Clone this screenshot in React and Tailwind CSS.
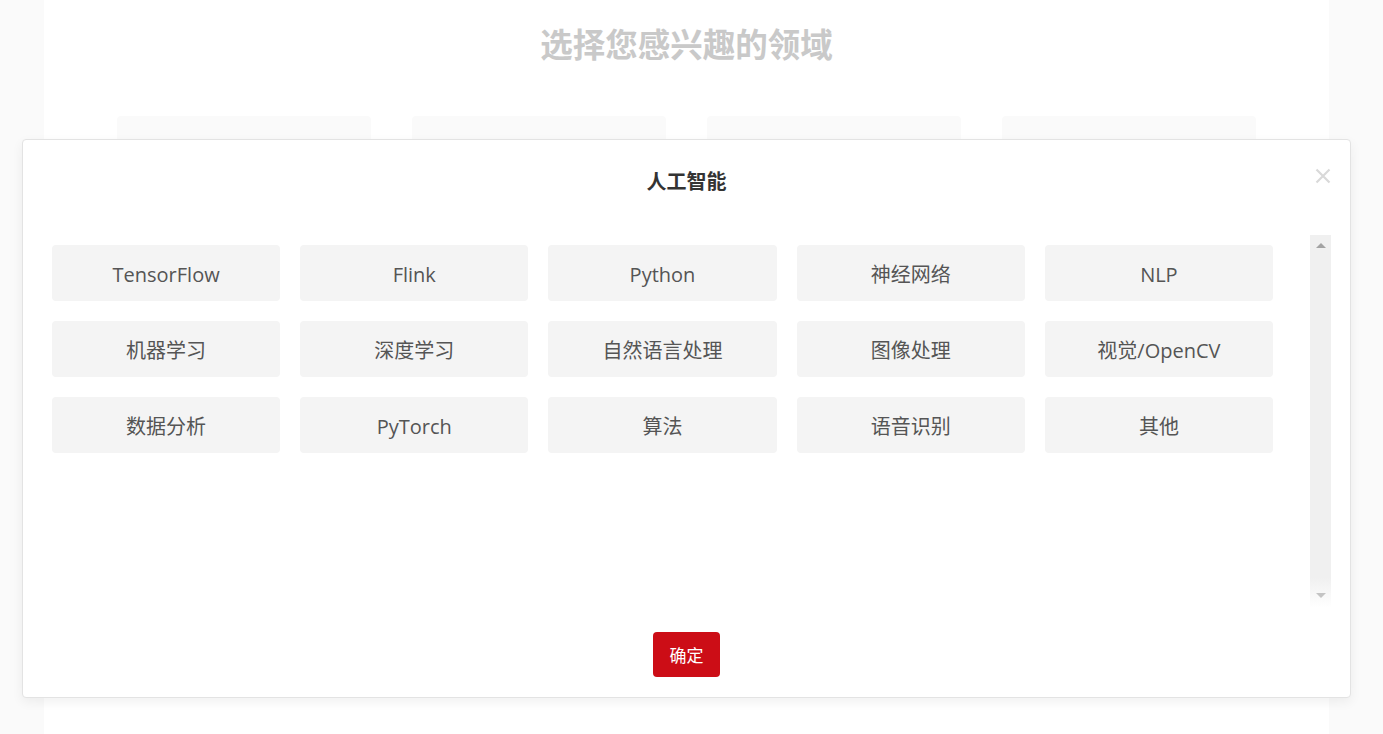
import React from "react";

const items = [
  "TensorFlow", "Flink", "Python", "神经网络", "NLP",
  "机器学习", "深度学习", "自然语言处理", "图像处理", "视觉/OpenCV",
  "数据分析", "PyTorch", "算法", "语音识别", "其他",
];

const font = { fontFamily: '"Open Sans", "Noto Sans CJK SC", sans-serif' };

export default function App() {
  return (
    <div className="relative h-[734px] w-[1383px] overflow-hidden bg-[#fafafa]" style={font}>
      <div className="ml-[44px] h-[734px] w-[1285px] bg-white">
        <h1 className="pt-[25px] text-center text-[32.5px] font-bold leading-[40px] text-[#c9c9c9]">
          选择您感兴趣的领域
        </h1>
        <div className="mt-[51px] flex gap-[41px] pl-[73px]">
          <div className="h-[200px] w-[254px] rounded-[4px] bg-[#fafafa]" />
          <div className="h-[200px] w-[254px] rounded-[4px] bg-[#fafafa]" />
          <div className="h-[200px] w-[254px] rounded-[4px] bg-[#fafafa]" />
          <div className="h-[200px] w-[254px] rounded-[4px] bg-[#fafafa]" />
        </div>
      </div>

      <div className="absolute left-[22px] top-[139px] flex h-[559px] w-[1329px] flex-col rounded-[4px] border border-[#e3e3e3] bg-white shadow-[0_4px_12px_rgba(0,0,0,0.06)]">
        <div className="pt-[29px] text-center text-[20px] font-bold leading-[26px] text-[#333333]">
          人工智能
        </div>
        <div className="absolute right-[19px] top-[28px] h-[16px] w-[16px]">
          <svg viewBox="0 0 16 16" width="16" height="16">
            <path d="M1.5 1.5 L14.5 14.5 M14.5 1.5 L1.5 14.5" stroke="#d9d9d9" strokeWidth="2.2" />
          </svg>
        </div>
        <div className="ml-[29px] mt-[40px] flex h-[370px] w-[1279px]">
          <div className="flex-1 pt-[10px]">
            <div className="grid w-[1221px] grid-cols-5 gap-x-[20px] gap-y-[20px]">
              {items.map((t) => (
                <div
                  key={t}
                  className="flex h-[56px] items-center justify-center rounded-[4px] bg-[#f4f4f4] pt-[3px] text-[20px] text-[#555555]"
                >
                  {t}
                </div>
              ))}
            </div>
          </div>
          <div className="relative h-[373px] w-[21px] bg-gradient-to-b from-[#f0f0f0] from-[92%] to-white">
            <div className="absolute left-[6px] top-[8px] h-0 w-0 border-x-[5px] border-b-[5px] border-x-transparent border-b-[#a3a3a3]" />
            <div className="absolute bottom-[10px] left-[6px] h-0 w-0 border-x-[5px] border-t-[5px] border-x-transparent border-t-[#c4c4c4]" />
          </div>
        </div>
        <div className="mt-[27px] flex justify-center">
          <button className="h-[45px] w-[67px] rounded-[4px] bg-[#cc0d16] pt-[2px] text-[17px] text-white">
            确定
          </button>
        </div>
      </div>
    </div>
  );
}
